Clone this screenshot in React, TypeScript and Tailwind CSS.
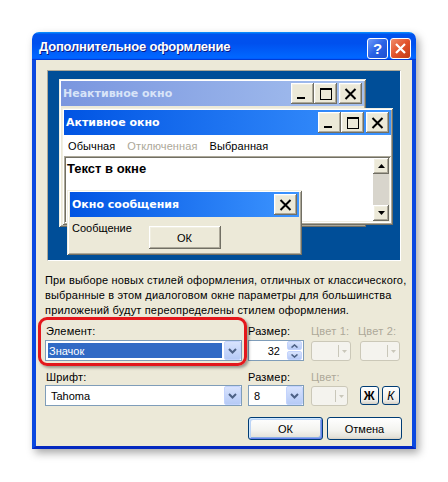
import React from "react";

const raised =
  "bg-[#ECE9D8] shadow-[inset_-1px_-1px_0_#716F64,inset_1px_1px_0_#FFFFFF,inset_-2px_-2px_0_#ACA899,inset_2px_2px_0_#F1EFE2]";
const winFrame =
  "bg-[#ECE9D8] shadow-[inset_1px_1px_0_#F1EFE2,inset_-1px_-1px_0_#716F64,inset_2px_2px_0_#FFFFFF,inset_-2px_-2px_0_#ACA899]";
const activeTitle = "bg-[linear-gradient(90deg,#0054E3,#3D95FF)]";
const previewTitleText = "font-['DejaVu_Sans',sans-serif] font-bold text-[11px] leading-[14px]";

function MinBtn() {
  return (
    <div className={`w-[23px] h-[21px] ${raised}`}>
      <svg width="23" height="21" viewBox="0 0 23 21">
        <rect x="6" y="14" width="8" height="2" fill="#000" />
      </svg>
    </div>
  );
}

function MaxBtn() {
  return (
    <div className={`w-[23px] h-[21px] ${raised}`}>
      <svg width="23" height="21" viewBox="0 0 23 21">
        <path d="M6 5h12v12H6z M7 7h10v9H7z" fill="#000" fillRule="evenodd" />
      </svg>
    </div>
  );
}

function XBtn({ className = "" }: { className?: string }) {
  return (
    <div className={`w-[23px] h-[21px] ${raised} ${className}`}>
      <svg width="23" height="21" viewBox="0 0 23 21">
        <path d="M6.5 6l10 10M16.5 6l-10 10" stroke="#000" strokeWidth="2" />
      </svg>
    </div>
  );
}

function ArrowBtn({ up }: { up?: boolean }) {
  return (
    <div className={`w-[16px] h-[16px] flex items-center justify-center ${raised}`}>
      <svg width="7" height="4" viewBox="0 0 7 4">
        {up ? <path d="M3.5 0L7 4H0z" fill="#000" /> : <path d="M0 0h7L3.5 4z" fill="#000" />}
      </svg>
    </div>
  );
}

function Chevron() {
  return (
    <svg width="9" height="6" viewBox="0 0 9 6">
      <path d="M1 1l3.5 3.5L8 1" stroke="#4D6185" strokeWidth="2" fill="none" />
    </svg>
  );
}

function DropBtn() {
  return (
    <div className="w-[17px] h-[19px] flex items-center justify-center rounded-[2px] border border-[#C3D3FD] bg-[linear-gradient(180deg,#D8E3FD,#B6CAF6)]">
      <Chevron />
    </div>
  );
}

function Combo({ children }: { children: React.ReactNode }) {
  return (
    <div className="h-[21px] border border-[#7F9DB9] bg-white flex items-center">
      <div className="flex-1 h-full flex items-center">{children}</div>
      <DropBtn />
    </div>
  );
}

function ColorBtn({ w }: { w: string }) {
  return (
    <div className={`${w} h-[20px] mt-[1px] rounded-[3px] border border-[#CBC8B8] bg-[#F4F3EE] flex items-center justify-end pr-[3px]`}>
      <div className="w-[1px] h-[12px] bg-[#C9C7BA] mr-[3px]" />
      <svg width="5" height="3" viewBox="0 0 5 3">
        <path d="M0 0h5L2.5 3z" fill="#C9C7BA" />
      </svg>
    </div>
  );
}

function XPButton({ children, def }: { children: React.ReactNode; def?: boolean }) {
  return (
    <div
      className={`w-[75px] h-[23px] rounded-[3px] border border-[#003C74] bg-[linear-gradient(180deg,#FFFFFF_0%,#F3F3EF_60%,#E5E3DA_90%,#D6D0C5_100%)] flex items-center justify-center ${
        def
          ? "shadow-[inset_1px_1px_0_#CEE7FF,inset_-1px_-1px_0_#6982EE,inset_2px_2px_0_#BCD4F6,inset_-2px_-2px_0_#89ADE4]"
          : ""
      }`}
    >
      {children}
    </div>
  );
}

function ToggleBtn({ children }: { children: React.ReactNode }) {
  return (
    <div className="w-[19px] h-[19px] rounded-[3px] border border-[#003C74] bg-[linear-gradient(180deg,#FFFFFF,#ECEBE6_80%,#D6D0C5)] flex items-center justify-center">
      {children}
    </div>
  );
}

export default function App() {
  return (
    <div className="relative w-[448px] h-[482px] bg-white pt-[32px] pl-[32px] font-['Liberation_Sans',Arial,sans-serif] text-[11px] leading-[14px] text-black overflow-hidden">
      <div className="w-[384px] h-[417px] flex flex-col rounded-t-[7px] shadow-[3px_4px_8px_rgba(0,0,0,0.35)]">
        {/* Title bar */}
        <div className="h-[28px] shrink-0 flex items-start rounded-t-[7px] bg-[linear-gradient(180deg,#0997ff_0%,#0053ee_8%,#0050ee_40%,#0066ff_88%,#0066ff_93%,#005bff_95%,#003dd7_96%,#003dd7_100%)] pl-[7px] pr-[5px]">
          <span className="mt-[7px] text-[13px] leading-[16px] font-bold tracking-[-0.2px] text-white [text-shadow:1px_1px_0_#0a1883]">
            Дополнительное оформление
          </span>
          <div className="ml-auto mt-[6px] flex gap-[2px]">
            <div className="w-[21px] h-[21px] rounded-[3px] border border-white bg-[linear-gradient(135deg,#6F9BFA,#2A62E6_50%,#1E4FD0)] flex items-center justify-center text-white font-bold text-[15px] leading-none">
              ?
            </div>
            <div className="w-[21px] h-[21px] rounded-[3px] border border-white bg-[linear-gradient(135deg,#F08D6C,#E2522B_50%,#C13A17)] flex items-center justify-center">
              <svg width="19" height="19" viewBox="0 0 19 19">
                <path d="M5 5l9 9M14 5l-9 9" stroke="#fff" strokeWidth="2.2" />
              </svg>
            </div>
          </div>
        </div>

        {/* Body */}
        <div className="flex-1 flex flex-col border-x-[4px] border-b-[3px] border-x-[#0A48E0] border-b-[#0328C0] bg-[#ECE9D8]">
          {/* Preview */}
          <div className="relative ml-[11px] mt-[10px] w-[354px] h-[191px] border border-t-[#ACA899] border-l-[#ACA899] border-b-white border-r-white bg-[#004E98]">
            {/* Inactive window */}
            <div className={`absolute left-[11px] top-[8px] w-[307px] h-[148px] p-[2px] ${winFrame}`}>
              <div className="h-[25px] flex items-center bg-[linear-gradient(90deg,#7A96DF,#A6C1EF)] pl-[2px] pr-[2px]">
                <span className={`${previewTitleText} text-[#D8E4F8]`}>Неактивное окно</span>
                <div className="ml-auto flex">
                  <MinBtn />
                  <MaxBtn />
                  <XBtn className="ml-[2px]" />
                </div>
              </div>
            </div>

            {/* Active window */}
            <div className={`absolute left-[14px] top-[37px] w-[331px] h-[117px] p-[2px] flex flex-col ${winFrame}`}>
              <div className={`h-[25px] shrink-0 flex items-center ${activeTitle} pl-[2px] pr-[2px]`}>
                <span className={`${previewTitleText} text-white`}>Активное окно</span>
                <div className="ml-auto flex">
                  <MinBtn />
                  <MaxBtn />
                  <XBtn className="ml-[2px]" />
                </div>
              </div>
              <div className="h-[21px] shrink-0 bg-white flex items-center gap-[12px] pl-[4px] tracking-[0.1px]">
                <span>Обычная</span>
                <span className="text-[#ACA899]">Отключенная</span>
                <span>Выбранная</span>
              </div>
              <div className="flex-1 flex bg-white p-[2px] shadow-[inset_1px_1px_0_#ACA899,inset_-1px_-1px_0_#FFFFFF,inset_2px_2px_0_#716F64,inset_-2px_-2px_0_#F1EFE2]">
                <div className="flex-1 pl-[1px] pt-[3px] text-[13px] leading-[16px] font-bold">Текст в окне</div>
                <div className="w-[16px] flex flex-col">
                  <ArrowBtn up />
                  <div className="flex-1 bg-[#D8D5CC]" />
                  <ArrowBtn />
                </div>
              </div>
            </div>

            {/* Message box */}
            <div className={`absolute left-[19px] top-[119px] w-[235px] h-[65px] px-[3px] py-[2px] flex flex-col ${winFrame}`}>
              <div className={`h-[25px] shrink-0 flex items-center ${activeTitle} pl-[2px] pr-[2px]`}>
                <span className={`${previewTitleText} text-white`}>Окно сообщения</span>
                <XBtn className="ml-auto" />
              </div>
              <div className="flex-1 grid grid-cols-[1fr_72px_1fr] items-start">
                <span className="pl-[2px] pt-[5px] leading-[13px]">Сообщение</span>
                <div className={`mt-[9px] h-[23px] flex items-center justify-center ${raised}`}>ОК</div>
                <span />
              </div>
            </div>
          </div>

          {/* Description */}
          <p className="ml-[9px] mt-[12px] leading-[15px] whitespace-nowrap tracking-[0.17px]">
            При выборе новых стилей оформления, отличных от классического,
            <br />
            выбранные в этом диалоговом окне параметры для большинства
            <br />
            приложений будут переопределены стилем оформления.
          </p>

          {/* Row 1 labels */}
          <div className="ml-[9px] mt-[6px] grid grid-cols-[203px_63px_49px_40px] h-[14px] tracking-[0.2px]">
            <span className="pl-[1px]">Элемент:</span>
            <span>Размер:</span>
            <span className="text-[#ACA899]">Цвет 1:</span>
            <span className="text-[#ACA899] -ml-[2px]">Цвет 2:</span>
          </div>
          {/* Row 1 controls */}
          <div className="ml-[9px] mt-[2px] grid grid-cols-[203px_63px_49px_40px] items-start">
            <div className="w-[197px]">
              <Combo>
                <div className="ml-[2px] mr-[2px] flex-1 h-[15px] bg-[#316AC5] text-white flex items-center pl-[1px]">Значок</div>
              </Combo>
            </div>
            <div className="w-[56px] h-[21px] border border-[#7F9DB9] bg-white flex items-center">
              <span className="flex-1 text-right pr-[7px]">32</span>
              <div className="w-[15px] h-[19px] flex flex-col gap-[1px] mr-[1px]">
                <div className="flex-1 rounded-[2px] bg-[linear-gradient(180deg,#D8E3FD,#B6CAF6)] border border-[#C3D3FD] flex items-center justify-center">
                  <svg width="7" height="4" viewBox="0 0 7 4">
                    <path d="M0.5 3.5l3-2.5 3 2.5" stroke="#4D6185" strokeWidth="1.6" fill="none" />
                  </svg>
                </div>
                <div className="flex-1 rounded-[2px] bg-[linear-gradient(180deg,#D8E3FD,#B6CAF6)] border border-[#C3D3FD] flex items-center justify-center">
                  <svg width="7" height="4" viewBox="0 0 7 4">
                    <path d="M0.5 0.5l3 2.5 3-2.5" stroke="#4D6185" strokeWidth="1.6" fill="none" />
                  </svg>
                </div>
              </div>
            </div>
            <ColorBtn w="w-[40px]" />
            <ColorBtn w="w-[40px]" />
          </div>

          {/* Row 2 labels */}
          <div className="ml-[9px] mt-[9px] grid grid-cols-[203px_63px_49px_40px] h-[14px] tracking-[0.2px]">
            <span className="pl-[1px]">Шрифт:</span>
            <span>Размер:</span>
            <span className="text-[#ACA899]">Цвет:</span>
            <span />
          </div>
          {/* Row 2 controls */}
          <div className="ml-[9px] mt-[1px] grid grid-cols-[203px_63px_49px_40px] items-center">
            <div className="w-[197px]">
              <Combo>
                <span className="pl-[5px]">Tahoma</span>
              </Combo>
            </div>
            <div className="w-[56px]">
              <Combo>
                <span className="pl-[5px]">8</span>
              </Combo>
            </div>
            <ColorBtn w="w-[37px]" />
            <div className="flex gap-[3px]">
              <ToggleBtn>
                <span className="font-bold text-[12px] leading-none">Ж</span>
              </ToggleBtn>
              <ToggleBtn>
                <span className="italic text-[12px] leading-none">К</span>
              </ToggleBtn>
            </div>
          </div>

          {/* Buttons */}
          <div className="mt-[11px] flex justify-end gap-[4px] pr-[10px]">
            <XPButton def>ОК</XPButton>
            <XPButton>Отмена</XPButton>
          </div>
        </div>
      </div>

      {/* Red annotation */}
      <div className="absolute left-[38px] top-[317px] w-[209px] h-[49px] rounded-[9px] border-[3px] border-[#E3171C] shadow-[2px_2px_3px_rgba(0,0,0,0.35)]" />
    </div>
  );
}
